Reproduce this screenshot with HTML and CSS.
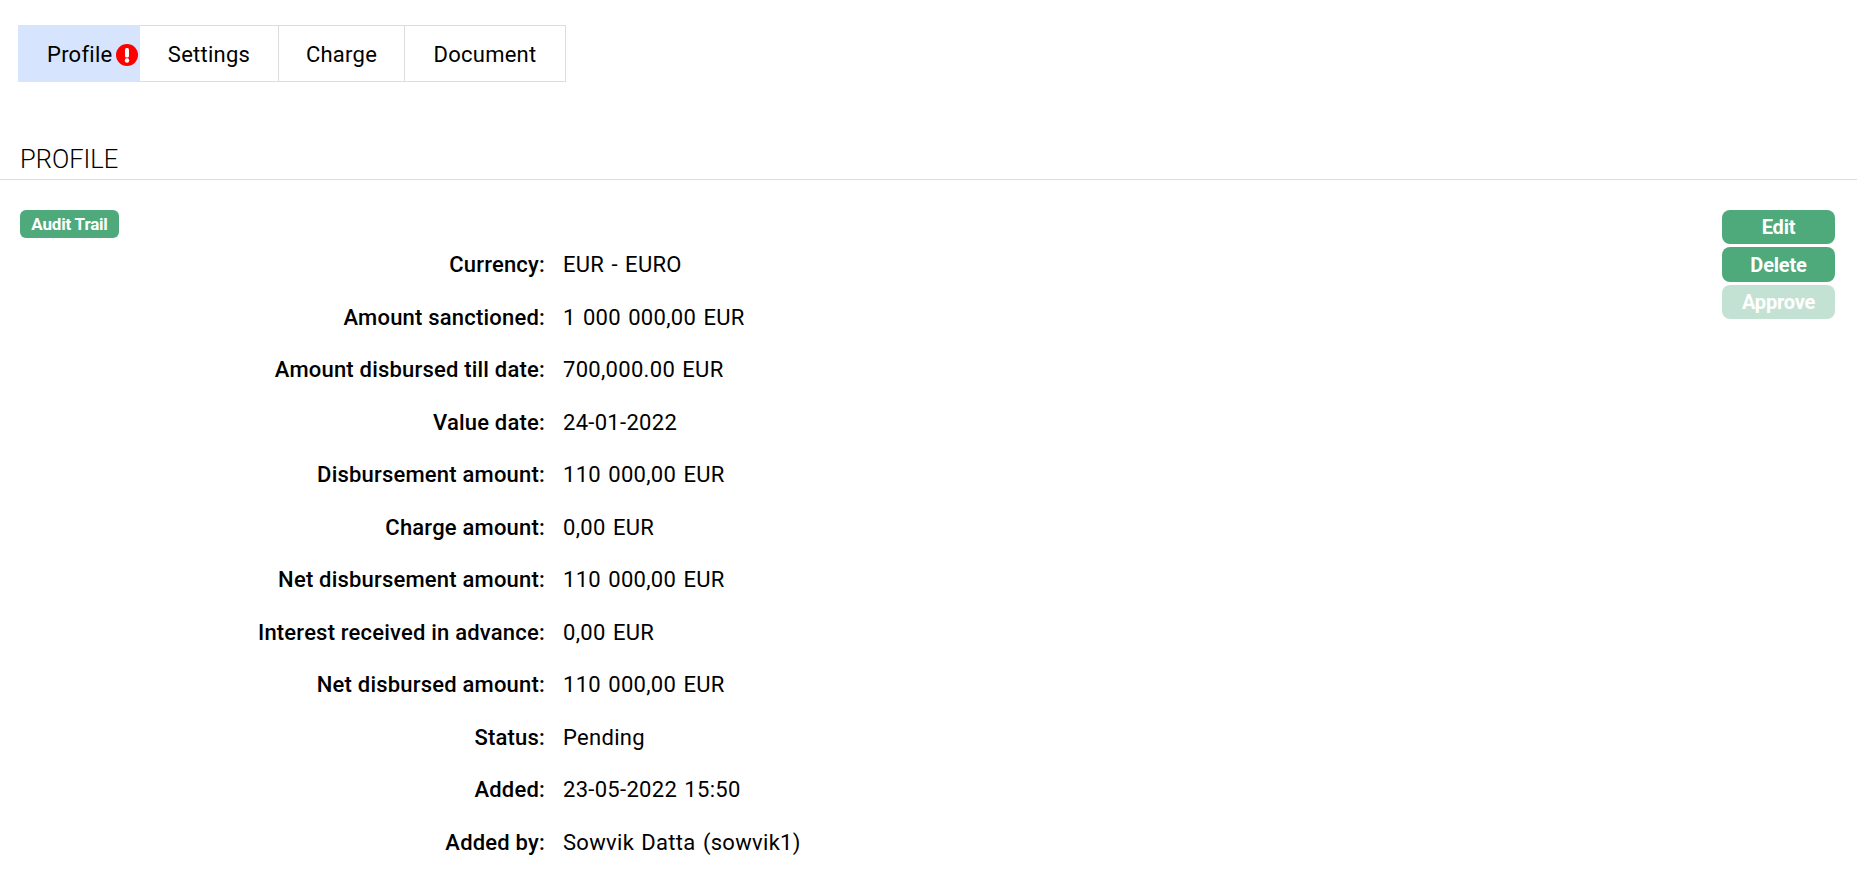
FILE: index.html
```html
<!DOCTYPE html>
<html lang="en">
<head>
    <meta charset="UTF-8">
    <title>Profile</title>
    <link rel="stylesheet" href="styles.css">
</head>
<body>
    <ul class="tabs">
        <li class="tab active">Profile<svg class="alert-icon" viewBox="0 0 20 20"><circle cx="10" cy="10" r="10" fill="#f00"/><rect x="8.2" y="3.6" width="3.6" height="8.6" rx="1.4" fill="#fff"/><circle cx="10" cy="15" r="2" fill="#fff"/></svg></li>
        <li class="tab">Settings</li>
        <li class="tab">Charge</li>
        <li class="tab">Document</li>
    </ul>

    <h2 class="section-title">PROFILE</h2>

    <div class="section-body">
        <div class="actions">
            <button class="btn">Edit</button>
            <button class="btn btn-tall">Delete</button>
            <button class="btn disabled">Approve</button>
        </div>
        <a class="audit">Audit Trail</a>
        <dl class="details">
            <div class="row"><dt>Currency:</dt><dd>EUR - EURO</dd></div>
            <div class="row"><dt>Amount sanctioned:</dt><dd>1 000 000,00 EUR</dd></div>
            <div class="row"><dt>Amount disbursed till date:</dt><dd>700,000.00 EUR</dd></div>
            <div class="row"><dt>Value date:</dt><dd>24-01-2022</dd></div>
            <div class="row"><dt>Disbursement amount:</dt><dd>110 000,00 EUR</dd></div>
            <div class="row"><dt>Charge amount:</dt><dd>0,00 EUR</dd></div>
            <div class="row"><dt>Net disbursement amount:</dt><dd>110 000,00 EUR</dd></div>
            <div class="row"><dt>Interest received in advance:</dt><dd>0,00 EUR</dd></div>
            <div class="row"><dt>Net disbursed amount:</dt><dd>110 000,00 EUR</dd></div>
            <div class="row"><dt>Status:</dt><dd>Pending</dd></div>
            <div class="row"><dt>Added:</dt><dd>23-05-2022 15:50</dd></div>
            <div class="row"><dt>Added by:</dt><dd>Sowvik Datta (sowvik1)</dd></div>
        </dl>
    </div>
</body>
</html>
```

FILE: styles.css
```css
* {
    margin: 0;
    padding: 0;
    box-sizing: border-box;
}

body {
    font-family: "Roboto", "Open Sans", sans-serif;
    font-size: 22px;
    color: #000;
    background-color: #fff;
    overflow: hidden;
}

.tabs {
    display: flex;
    list-style-type: none;
    width: max-content;
    height: 57px;
    margin: 25px 0 0 18px;
    border: 1px solid #ddd;
    border-left: none;
    letter-spacing: .25px;
}

.tab {
    display: flex;
    align-items: center;
    justify-content: center;
    width: 139px;
    padding-top: 2px;
    border-right: 1px solid #ddd;
}

.tab:nth-child(3) {
    width: 126px;
}

.tab:nth-child(4) {
    width: 160px;
    border-right: none;
}

.tab.active {
    width: 122px;
    padding-left: 29px;
    justify-content: flex-start;
    background-color: #d6e4fd;
    border-right: none;
    margin: -1px 0;
}

.alert-icon {
    width: 22px;
    height: 22px;
    margin-left: 4px;
    flex-shrink: 0;
}

.section-title {
    margin-top: 60px;
    height: 38px;
    padding: 2px 0 0 20px;
    font-size: 25.5px;
    font-weight: 300;
    line-height: 30px;
    border-bottom: 1px solid #ddd;
}

.section-body {
    position: relative;
    padding: 30px 20px 0;
}

.audit {
    display: block;
    width: 99px;
    height: 28px;
    border-radius: 6px;
    background-color: #4ea97b;
    color: #fff;
    font-size: 17px;
    font-weight: 700;
    line-height: 28px;
    text-align: center;
    letter-spacing: -.2px;
}

/* buttons sit over the right side of the details */
.actions {
    position: absolute;
    top: 30px;
    right: 22px;
    display: flex;
    flex-direction: column;
    gap: 3px;
}

.btn {
    width: 113px;
    height: 34px;
    border: none;
    border-radius: 8px;
    background-color: #4ea97b;
    color: #fff;
    font-family: inherit;
    font-size: 20px;
    font-weight: 700;
    letter-spacing: -.2px;
}

.btn-tall {
    height: 35px;
}

.btn.disabled {
    opacity: .33;
}

.details {
    margin-top: 1px;
}

.row {
    display: flex;
    height: 52.5px;
    line-height: 52.5px;
}

dt {
    width: 525px;
    font-weight: 500;
    text-align: right;
    letter-spacing: .2px;
}

dd {
    margin-left: 18px;
    letter-spacing: .3px;
    word-spacing: 1.5px;
}
```
